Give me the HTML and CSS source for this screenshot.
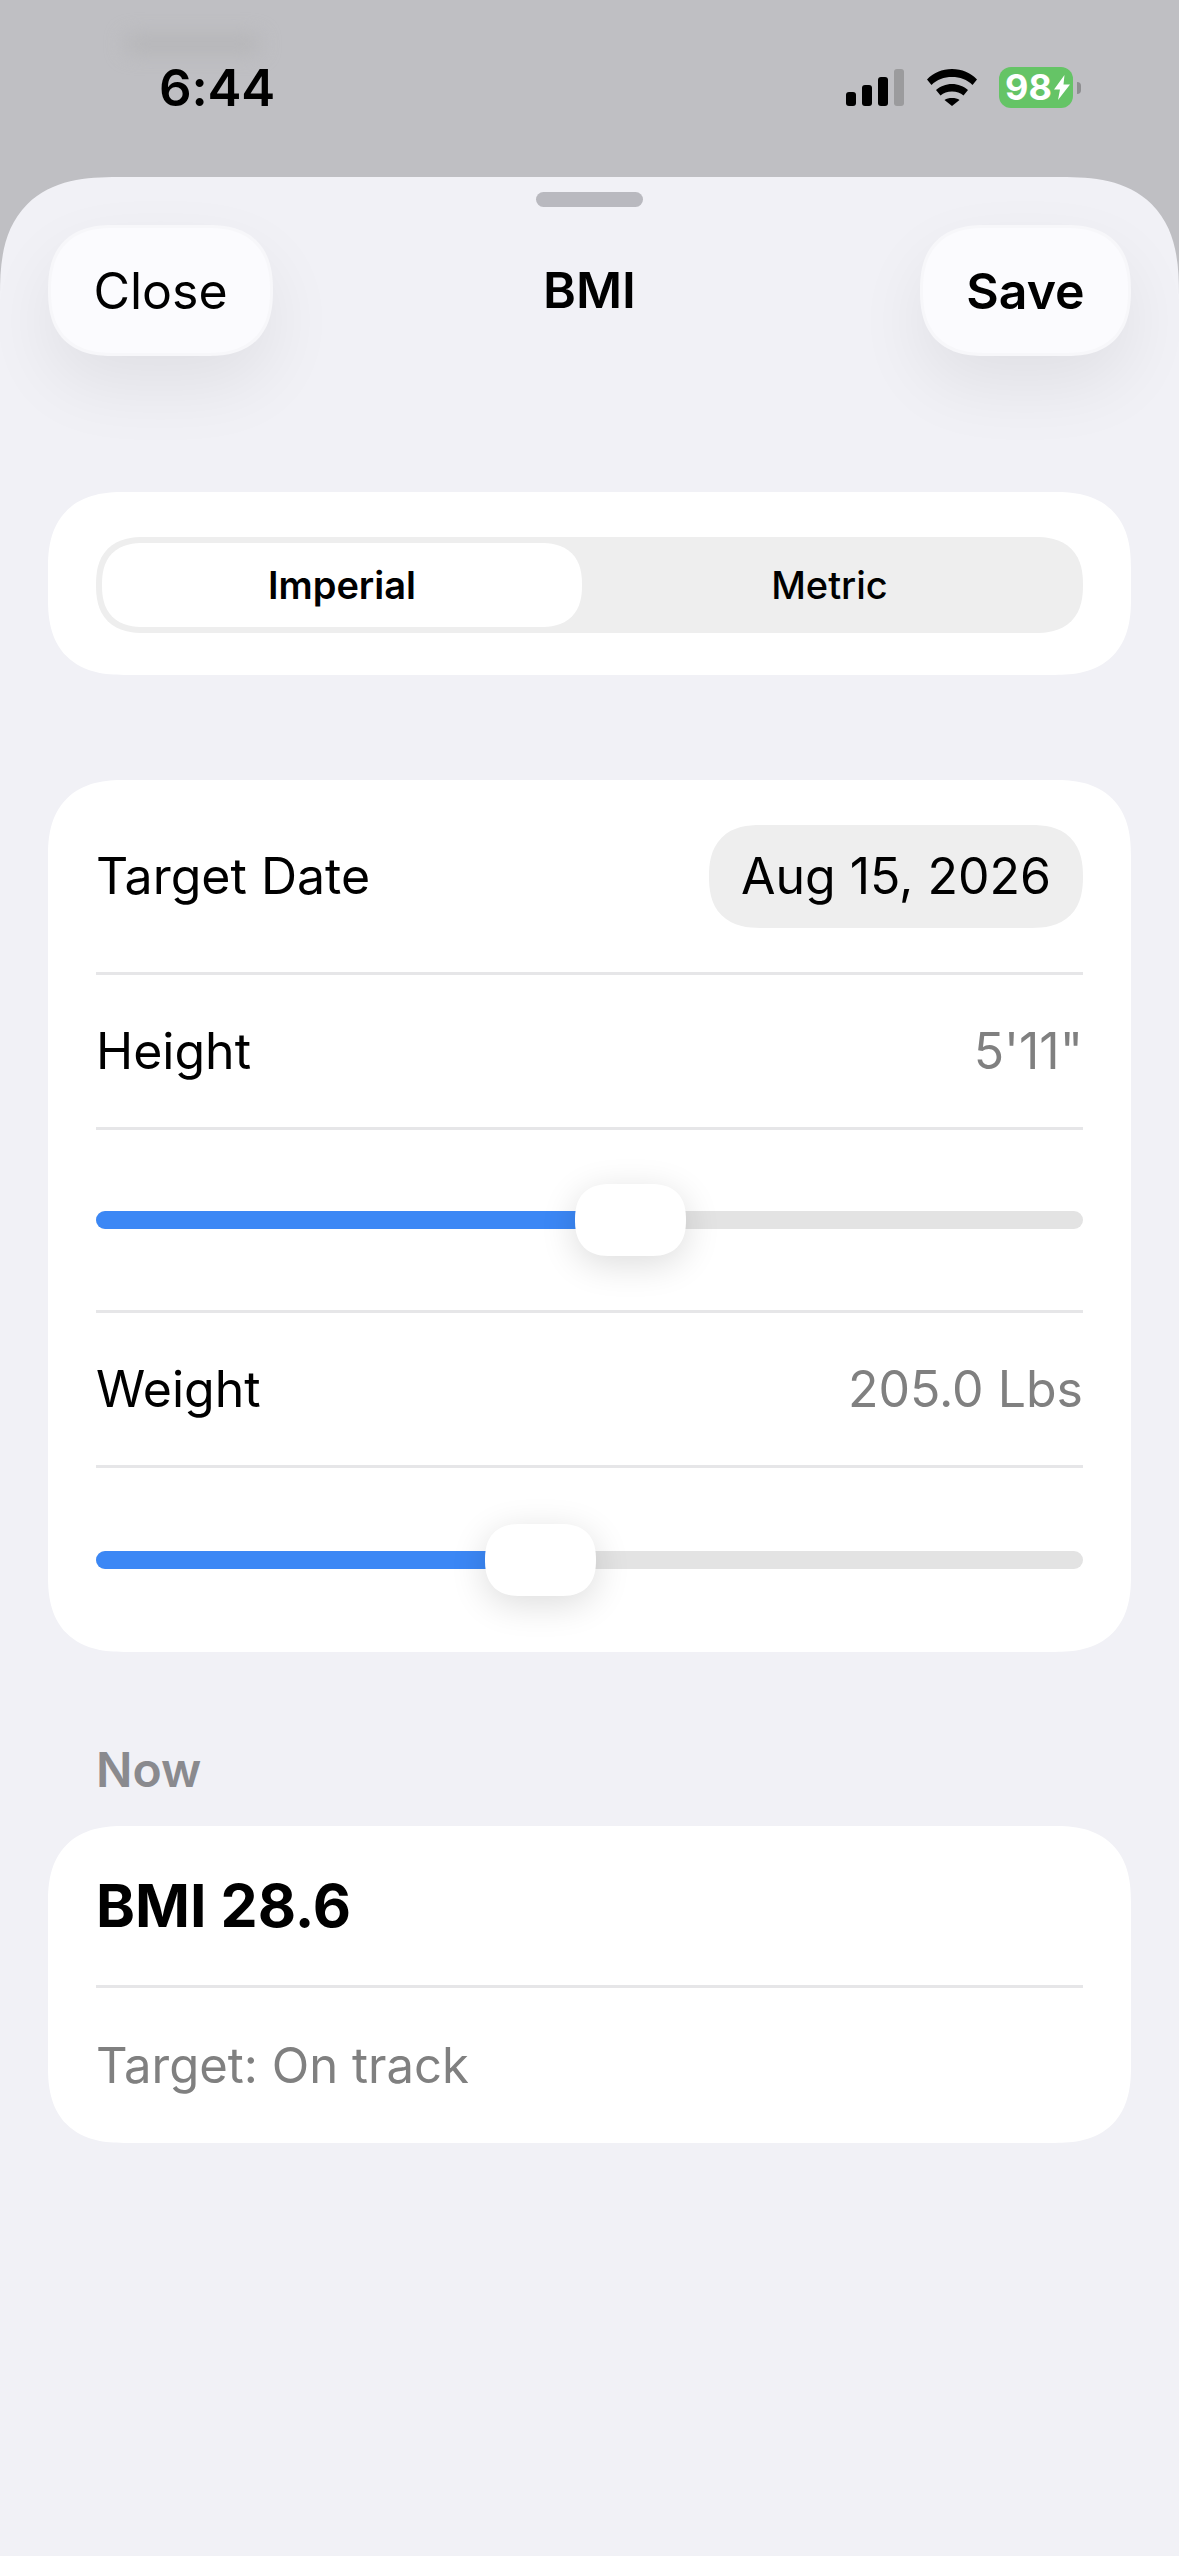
FILE: index.html
```html
<!DOCTYPE html>
<html lang="en">
<head>
<meta charset="utf-8">
<title>BMI</title>
<link rel="stylesheet" href="styles.css">
</head>
<body>
<div class="smudge"></div>
<header class="status">
  <span class="time">6:44</span>
  <div class="status-icons">
    <div class="signal">
      <i class="bar b1"></i><i class="bar b2"></i><i class="bar b3"></i><i class="bar b4"></i>
    </div>
    <svg class="wifi" viewBox="0 0 50 37" width="50" height="37">
      <path d="M0 10.5C6.5 3.8 15 0 25 0S43.500 3.800 50 10.500L45.500 16C40 10.500 33 8 25 8S10 10.500 4.500 16Z"/>
      <path d="M9 21C13 17.500 19 15 25 15S37 17.500 41 21L36.500 26.500C33.500 24 29.500 22.500 25 22.500S16.500 24 13.500 26.500Z"/>
      <path d="M17.500 31C19.500 29.500 22 29 25 29S30.500 29.500 32.500 31L25 37Z"/>
    </svg>
    <div class="battery">
      <div class="battery-body">
        <span class="battery-num">98</span>
        <svg class="bolt" viewBox="0 0 16 25" width="16" height="25"><path d="M10.500 0L0 14.500H6L4 25L16 9.500H9.500Z"/></svg>
      </div>
      <i class="battery-nub"></i>
    </div>
  </div>
</header>
<main class="sheet">
  <div class="handle"></div>
  <div class="nav">
    <button class="nav-btn close">Close</button>
    <h1 class="title">BMI</h1>
    <button class="nav-btn save">Save</button>
  </div>

  <section class="card seg-card">
    <div class="seg">
      <div class="seg-item active">Imperial</div>
      <div class="seg-item">Metric</div>
    </div>
  </section>

  <section class="card main-card">
    <div class="row row-date">
      <span>Target Date</span>
      <span class="pill">Aug 15, 2026</span>
    </div>
    <div class="divider"></div>
    <div class="row row-value">
      <span>Height</span>
      <span class="value">5'11"</span>
    </div>
    <div class="divider"></div>
    <div class="slider-row">
      <div class="track">
        <div class="fill" style="width:484px"></div>
        <div class="thumb" style="left:479px"></div>
      </div>
    </div>
    <div class="divider"></div>
    <div class="row row-value">
      <span>Weight</span>
      <span class="value">205.0 Lbs</span>
    </div>
    <div class="divider"></div>
    <div class="slider-row last">
      <div class="track">
        <div class="fill" style="width:394px"></div>
        <div class="thumb" style="left:389px"></div>
      </div>
    </div>
  </section>

  <h2 class="section-label">Now</h2>
  <section class="card now-card">
    <div class="row row-bmi"><strong>BMI 28.6</strong></div>
    <div class="divider"></div>
    <div class="row row-target"><span class="value">Target: On track</span></div>
  </section>
</main>
</body>
</html>
```

FILE: styles.css
```css
* { box-sizing: border-box; }
html, body { margin: 0; padding: 0; }
body {
  width: 1179px;
  height: 2556px;
  overflow: hidden;
  background: #bfbfc3;
  font-family: Inter, "Liberation Sans", sans-serif;
  color: #000;
  position: relative;
  display: flex;
  flex-direction: column;
}
.smudge {
  position: absolute;
  left: 125px;
  top: 36px;
  width: 135px;
  height: 16px;
  background: #b4b4b6;
  border-radius: 8px;
  filter: blur(10px);
}
.status {
  height: 177px;
  flex: none;
  display: flex;
  justify-content: space-between;
  padding: 67px 98px 0 159px;
  position: relative;
}
.time {
  font-size: 51px;
  font-weight: 600;
  line-height: 41px;
  letter-spacing: -0.2px;
}
.status-icons { display: flex; align-items: flex-start; }
.signal {
  display: flex;
  align-items: flex-end;
  gap: 6px;
  height: 37px;
  margin-top: 2px;
}
.bar { display: block; width: 10px; background: #000; border-radius: 3px; }
.b1 { height: 14px; }
.b2 { height: 21px; }
.b3 { height: 29px; }
.b4 { height: 37px; background: #9b9b9d; }
.wifi { margin: 2px 0 0 23px; fill: #000; display: block; }
.battery { display: flex; align-items: center; margin-left: 22px; }
.battery-body {
  width: 74px;
  height: 41px;
  background: #65c466;
  border-radius: 12px;
  display: flex;
  align-items: center;
  padding-left: 6px;
  color: #fff;
}
.battery-num {
  font-size: 36px;
  font-weight: 700;
  line-height: 41px;
  letter-spacing: 0;
}
.bolt { fill: #fff; margin-left: 2px; flex: none; }
.battery-nub {
  display: block;
  width: 4px;
  height: 12px;
  margin-left: 4px;
  background: #8e8e90;
  border-radius: 0 6px 6px 0;
}

.sheet {
  flex: 1;
  background: #f1f1f6;
  border-radius: 118px 118px 0 0 / 118px 118px 0 0;
  corner-shape: superellipse(1.4);
  padding: 15px 48px 0;
  display: flex;
  flex-direction: column;
  position: relative;
  overflow: hidden;
}
.handle {
  width: 107px;
  height: 15px;
  border-radius: 8px;
  background: #b9b9bf;
  align-self: center;
  flex: none;
}
.nav {
  margin-top: 18px;
  height: 131px;
  flex: none;
  display: flex;
  align-items: center;
  justify-content: space-between;
  position: relative;
}
.nav-btn {
  height: 131px;
  border: 3px solid #f7f7fa;
  background: #fbfbfe;
  border-radius: 66px;
  corner-shape: superellipse(1.3);
  font-family: inherit;
  font-size: 50px;
  color: #000;
  padding: 0;
  box-shadow: 0 30px 70px rgba(0, 0, 0, 0.07);
}
.close { width: 225px; font-weight: 400; }
.save { width: 211px; font-weight: 600; }
.title {
  position: absolute;
  left: 0;
  right: 0;
  top: 0;
  margin: 0;
  text-align: center;
  font-size: 50px;
  font-weight: 600;
  line-height: 131px;
  pointer-events: none;
}
.card {
  background: #fff;
  border-radius: 76px;
  corner-shape: superellipse(1.3);
  flex: none;
}
.seg-card {
  margin-top: 136px;
  height: 183px;
  padding: 45px 48px;
}
.seg {
  height: 96px;
  border-radius: 48px;
  corner-shape: superellipse(1.3);
  background: #eeeeee;
  padding: 6px;
  display: grid;
  grid-template-columns: 480px 1fr;
}
.seg-item {
  display: flex;
  align-items: center;
  justify-content: center;
  font-size: 38px;
  font-weight: 500;
  border-radius: 42px;
  corner-shape: superellipse(1.3);
}
.active { background: #fff; font-weight: 600; }
.main-card {
  margin-top: 105px;
  height: 872px;
  padding: 0 48px;
  display: flex;
  flex-direction: column;
}
.row {
  display: flex;
  align-items: center;
  justify-content: space-between;
  font-size: 50px;
}
.row-date { height: 192px; }
.row-value { height: 152px; }
.pill {
  height: 103px;
  width: 374px;
  border-radius: 52px;
  corner-shape: superellipse(1.3);
  background: #eeeeee;
  display: flex;
  align-items: center;
  justify-content: center;
}
.value { color: #808080; }
.divider { height: 3px; background: #e6e6e8; flex: none; }
.slider-row { height: 180px; display: flex; align-items: center; }
.slider-row.last { height: 184px; }
.track {
  flex: 1;
  height: 18px;
  border-radius: 9px;
  background: #e3e3e3;
  position: relative;
}
.fill {
  height: 18px;
  border-radius: 9px 0 0 9px;
  background: #3b87f5;
}
.thumb {
  position: absolute;
  top: -27px;
  width: 111px;
  height: 72px;
  background: #fff;
  border-radius: 36px;
  corner-shape: superellipse(1.3);
  box-shadow: 0 8px 36px rgba(0, 0, 0, 0.14);
}
.section-label {
  margin: 0;
  padding: 87px 0 0 48px;
  height: 174px;
  flex: none;
  font-size: 48px;
  line-height: 62px;
  font-weight: 600;
  color: #8a8a8e;
}
.now-card {
  height: 317px;
  padding: 0 48px;
  display: flex;
  flex-direction: column;
}
.row-bmi { height: 159px; font-size: 59px; font-weight: 700; }
.row-bmi strong { font-weight: 700; }
.row-target { height: 155px; font-size: 49px; }
```
